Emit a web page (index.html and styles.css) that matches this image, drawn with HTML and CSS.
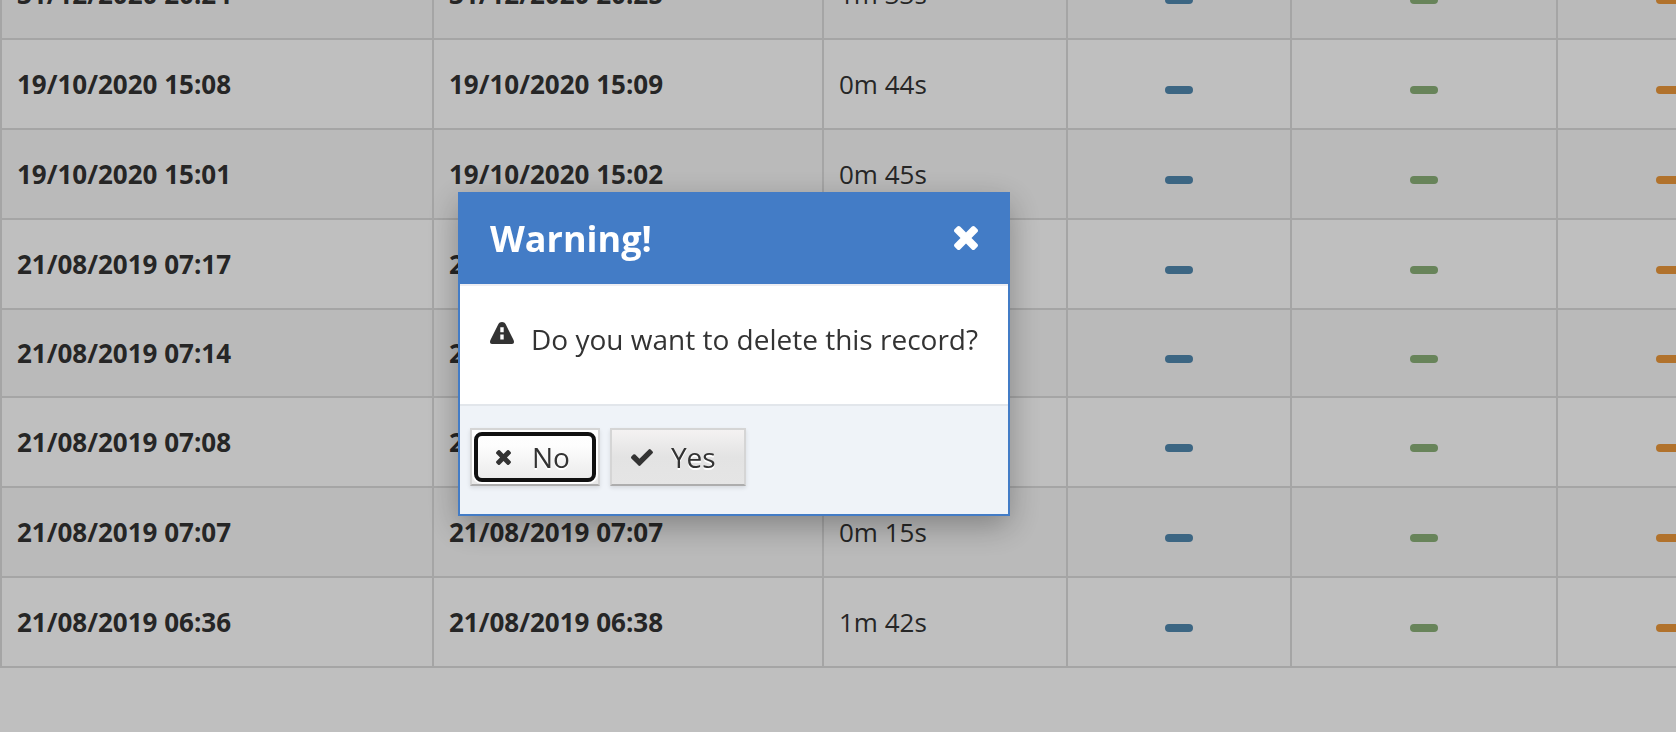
FILE: index.html
```html
<!DOCTYPE html>
<html lang="en">
<head>
<meta charset="utf-8">
<title>Records</title>
<link rel="stylesheet" href="styles.css">
</head>
<body>
<svg class="sprite" aria-hidden="true">
  <symbol id="icon-times" viewBox="302 366 1188 1188"><path d="M1490 1322q0 40-28 68l-136 136q-28 28-68 28t-68-28l-294-294-294 294q-28 28-68 28t-68-28l-136-136q-28-28-28-68t28-68l294-294-294-294q-28-28-28-68t28-68l136-136q28-28 68-28t68 28l294 294 294-294q28-28 68-28t68 28l136 136q28 28 28 68t-28 68l-294 294 294 294q28 28 28 68z"/></symbol>
  <symbol id="icon-check" viewBox="121 334 1550 1188"><path d="M1671 566q0 40-28 68l-724 724-136 136q-28 28-68 28t-68-28l-136-136-362-362q-28-28-28-68t28-68l136-136q28-28 68-28t68 28l294 295 656-657q28-28 68-28t68 28l136 136q28 28 28 68z"/></symbol>
  <symbol id="icon-alert" viewBox="0 0 24 22"><path fill-rule="evenodd" d="M12 0c1.700 0 2.900.8 3.700 2.300l7.600 15.200c.5 1 .7 1.700.7 2.500 0 1.200-.8 2-2 2H2c-1.200 0-2-.8-2-2 0-.8.2-1.500.7-2.500L8.300 2.300C9.100.8 10.300 0 12 0zM10.300 5.300v4.900h3.400V5.300zM10.300 12.600v4.800h3.400v-4.800z"/></symbol>
</svg>

<main class="page">
  <table class="records">
    <colgroup>
      <col class="col-start"><col class="col-end"><col class="col-duration"><col class="col-blue"><col class="col-green"><col class="col-orange">
    </colgroup>
    <tbody>
      <tr><td class="date">31/12/2020 20:24</td><td class="date">31/12/2020 20:25</td><td>1m 33s</td><td class="mark"><span class="bar blue"></span></td><td class="mark"><span class="bar green"></span></td><td class="mark"><span class="bar orange"></span></td></tr>
      <tr><td class="date">19/10/2020 15:08</td><td class="date">19/10/2020 15:09</td><td>0m 44s</td><td class="mark"><span class="bar blue"></span></td><td class="mark"><span class="bar green"></span></td><td class="mark"><span class="bar orange"></span></td></tr>
      <tr><td class="date">19/10/2020 15:01</td><td class="date">19/10/2020 15:02</td><td>0m 45s</td><td class="mark"><span class="bar blue"></span></td><td class="mark"><span class="bar green"></span></td><td class="mark"><span class="bar orange"></span></td></tr>
      <tr><td class="date">21/08/2019 07:17</td><td class="date">2</td><td></td><td class="mark"><span class="bar blue"></span></td><td class="mark"><span class="bar green"></span></td><td class="mark"><span class="bar orange"></span></td></tr>
      <tr class="short"><td class="date">21/08/2019 07:14</td><td class="date">2</td><td></td><td class="mark"><span class="bar blue"></span></td><td class="mark"><span class="bar green"></span></td><td class="mark"><span class="bar orange"></span></td></tr>
      <tr><td class="date">21/08/2019 07:08</td><td class="date">2</td><td></td><td class="mark"><span class="bar blue"></span></td><td class="mark"><span class="bar green"></span></td><td class="mark"><span class="bar orange"></span></td></tr>
      <tr><td class="date">21/08/2019 07:07</td><td class="date">21/08/2019 07:07</td><td>0m 15s</td><td class="mark"><span class="bar blue"></span></td><td class="mark"><span class="bar green"></span></td><td class="mark"><span class="bar orange"></span></td></tr>
      <tr><td class="date">21/08/2019 06:36</td><td class="date">21/08/2019 06:38</td><td>1m 42s</td><td class="mark"><span class="bar blue"></span></td><td class="mark"><span class="bar green"></span></td><td class="mark"><span class="bar orange"></span></td></tr>
    </tbody>
  </table>
</main>

<div class="overlay">
  <section class="dialog" role="alertdialog" aria-modal="true" aria-labelledby="dialog-title" aria-describedby="dialog-text">
    <header class="dialog-header">
      <h2 id="dialog-title">Warning!</h2>
      <button class="close" type="button" aria-label="Close"><svg><use href="#icon-times"/></svg></button>
    </header>
    <div class="dialog-body">
      <svg class="alert-icon" aria-hidden="true"><use href="#icon-alert"/></svg>
      <p id="dialog-text">Do you want to delete this record?</p>
    </div>
    <footer class="dialog-footer">
      <button class="btn focused" type="button"><svg class="no-icon" aria-hidden="true"><use href="#icon-times"/></svg><span>No</span></button>
      <button class="btn" type="button"><svg class="yes-icon" aria-hidden="true"><use href="#icon-check"/></svg><span>Yes</span></button>
    </footer>
  </section>
</div>
</body>
</html>
```

FILE: styles.css
```css
* { box-sizing: border-box; }

body {
  margin: 0;
  overflow: hidden;
  background: #fff;
  color: #333;
  font-family: "Open Sans", "Noto Sans", sans-serif;
  font-size: 26px;
  line-height: 36px;
}

.sprite { display: none; }
svg { display: block; fill: currentColor; }

/* The list is scrolled to its end, with the earlier rows out of view. */
.page {
  display: flex;
  flex-direction: column;
  justify-content: flex-end;
  height: 100vh;
  padding-bottom: 64px;
  overflow: hidden;
}

.records {
  flex: none;
  width: 100%;
  table-layout: fixed;
  border-collapse: collapse;
}
.col-start { width: 432px; }
.col-end { width: 390px; }
.col-duration { width: 244px; }
.col-blue { width: 224px; }
.col-green { width: 266px; }
.col-orange { width: 226px; }

.records tr { height: 90px; }
.records tr.short { height: 88px; }
.records tr:nth-child(odd) { background: #f9f9f9; }
.records td {
  padding: 0 15px;
  border: 2px solid #ddd;
  vertical-align: middle;
  white-space: nowrap;
}
.records .date { font-weight: 700; }
.records .mark { text-align: center; }
.bar {
  display: inline-block;
  width: 28px;
  height: 8px;
  border-radius: 4px;
}
.blue { background: #5188af; }
.green { background: #8bb178; }
.orange { background: #ec993b; }

.overlay {
  position: fixed;
  inset: 0;
  background: rgba(0, 0, 0, .25);
}

.dialog {
  position: absolute;
  top: 192px;
  left: 458px;
  border: 2px solid #437cc6;
  background: #fff;
  box-shadow: 0 10px 30px rgba(0, 0, 0, .3);
  font-size: 28px;
  line-height: 40px;
}
.dialog-header {
  display: flex;
  align-items: center;
  justify-content: space-between;
  height: 90px;
  padding: 0 30px;
  background: #437cc6;
  color: #fff;
}
.dialog-header h2 {
  margin: 0;
  font-size: 36px;
  font-weight: 700;
  line-height: 48px;
}
.close {
  padding: 0 0 2px;
  border: 0;
  background: none;
  color: inherit;
}
.close svg { width: 24px; height: 24px; }

.dialog-body {
  display: flex;
  gap: 17px;
  height: 120px;
  padding: 33px 30px 0;
  border-top: 2px solid #eeeef2;
}
.dialog-body p { margin: 0; white-space: nowrap; }
.alert-icon { width: 24px; height: 22px; margin-top: 3px; }

.dialog-footer {
  display: flex;
  gap: 10px;
  padding: 22px 10px 28px;
  border-top: 2px solid #e2e6eb;
  background: #eff3f8;
}
.btn {
  position: relative;
  display: flex;
  align-items: center;
  height: 58px;
  padding: 0 28px 0 19px;
  border: 2px solid #d5d5d5;
  border-bottom-color: #adadad;
  background: linear-gradient(#f4f2f2, #e3e3e3 50%, #e5e5e5);
  box-shadow: 0 2px 4px rgba(0, 0, 0, .1);
  color: #333;
  font: inherit;
  text-shadow: 0 2px 0 #fff;
}
.btn.focused {
  padding-left: 24px;
  background: linear-gradient(#fff, #fdfdfd 30%, #e8e8e8);
}
.btn.focused::after {
  content: "";
  position: absolute;
  inset: 2px;
  border: 4px solid #101010;
  border-radius: 8px;
  box-shadow: 0 0 0 2px #fff;
}
.no-icon { width: 15px; height: 15px; margin-right: 21px; }
.yes-icon { width: 22px; height: 17px; margin-right: 18px; }
```
